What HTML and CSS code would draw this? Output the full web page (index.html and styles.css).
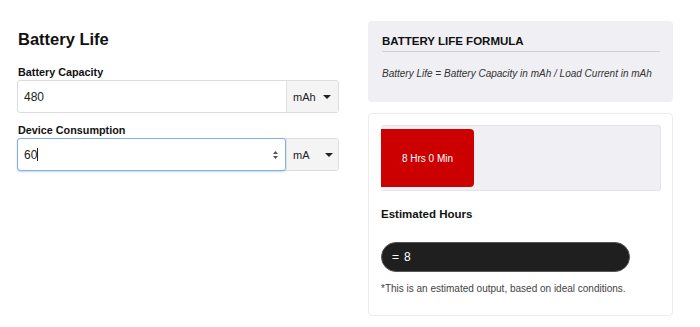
FILE: index.html
```html
<!DOCTYPE html>
<html lang="en">
<head>
  <meta charset="UTF-8" />
  <meta name="viewport" content="width=device-width, initial-scale=1" />
  <title>Battery Life Calculator</title>
  <link rel="stylesheet" href="styles.css">
</head>
<body>
  <div class="page">
    <div class="calc">
      <h1>Battery Life</h1>
      <label class="field-label" for="capacity">Battery Capacity</label>
      <div class="field">
        <input type="text" id="capacity" value="480" />
        <div class="unit">mAh <span class="caret"></span></div>
      </div>
      <label class="field-label" for="load">Device Consumption</label>
      <div class="field">
        <div class="input-wrap focused">
          <input type="text" id="load" value="60" />
          <span class="cursor"></span>
          <svg class="spin" width="7" height="10" viewBox="0 0 7 10"><path d="M3.5 1 L6 4 H1 Z M3.5 9 L6 6 H1 Z" fill="#555"/></svg>
        </div>
        <div class="unit">mA <span class="caret wide"></span></div>
      </div>
    </div>

    <div class="side">
      <div class="formula">
        <h2>BATTERY LIFE FORMULA</h2>
        <p>Battery Life = Battery Capacity in mAh / Load Current in mAh</p>
      </div>
      <div class="result">
        <div class="bar">
          <div class="bar-fill" style="width: 93px">8 Hrs 0 Min</div>
        </div>
        <h3>Estimated Hours</h3>
        <div class="pill"><span class="eq">=</span> 8</div>
        <p class="note">*This is an estimated output, based on ideal conditions.</p>
      </div>
    </div>
  </div>
</body>
</html>
```

FILE: styles.css
```css
body {
  margin: 0;
  font-family: "Liberation Sans", Arial, sans-serif;
  color: #111;
  background: #fff;
}
.page {
  display: flex;
  gap: 29px;
  padding: 21px 0 0 17px;
}
.calc {
  width: 322px;
  display: flex;
  flex-direction: column;
}
h1 {
  margin: 8px 0 16px 1px;
  font-size: 16.5px;
  line-height: 20px;
}
.field-label {
  font-size: 10.8px;
  font-weight: bold;
  line-height: 14px;
  margin: 0 0 1px 1px;
}
.field {
  display: flex;
  height: 33px;
  margin-bottom: 10px;
  border: 1px solid #dcdcdc;
  border-radius: 3px;
  box-sizing: border-box;
}
.field input {
  flex: 1;
  min-width: 0;
  border: none;
  outline: none;
  padding: 0 6px;
  font: 12px "Liberation Sans", Arial, sans-serif;
  color: #222;
  background: transparent;
}
.input-wrap {
  flex: 1;
  display: flex;
  align-items: center;
  margin: -1px 0 -1px -1px;
  border: 1px solid #86aee6;
  border-radius: 3px;
  box-shadow: 0 1px 2px rgba(90, 140, 220, 0.35);
}
.input-wrap input {
  flex: 0 0 auto;
  width: 13px;
  padding: 0 0 0 6px;
}
.cursor {
  width: 1px;
  height: 13px;
  background: #222;
}
.input-wrap .spin {
  margin-left: auto;
  margin-right: 6px;
}
.unit {
  width: 52px;
  display: flex;
  align-items: center;
  gap: 7px;
  padding-left: 6px;
  box-sizing: border-box;
  background: #f4f4f4;
  border-left: 1px solid #e2e2e2;
  font-size: 11px;
  color: #222;
}
.caret {
  width: 0;
  height: 0;
  border-left: 4px solid transparent;
  border-right: 4px solid transparent;
  border-top: 4px solid #222;
}
.caret.wide {
  margin-left: 8px;
}
.side {
  width: 305px;
  display: flex;
  flex-direction: column;
  gap: 11px;
}
.formula {
  background: #efeff4;
  border-radius: 4px;
  padding: 12px 13px 21px 14px;
}
.formula h2 {
  margin: 0;
  font-size: 11.5px;
  line-height: 16px;
  padding-bottom: 2px;
  border-bottom: 1px solid #cfcfd4;
}
.formula p {
  margin: 15px 0 0;
  font-size: 10px;
  line-height: 14px;
  font-style: italic;
  color: #333;
}
.result {
  border: 1px solid #ececec;
  border-radius: 4px;
  padding: 11px 11px 19px 12px;
}
.bar {
  height: 66px;
  box-sizing: border-box;
  padding: 3px 0;
  background: #efeff4;
  border: 1px solid #e3e3e8;
  border-left: none;
  border-radius: 3px;
}
.bar-fill {
  height: 100%;
  background: #cc0000;
  border-radius: 0 4px 4px 0;
  color: #fff;
  font-size: 10px;
  display: flex;
  align-items: center;
  justify-content: center;
}
.result h3 {
  margin: 15px 0 0;
  font-size: 11.5px;
  line-height: 16px;
}
.pill {
  margin-top: 20px;
  width: 249px;
  height: 30px;
  box-sizing: border-box;
  background: #1f1f1f;
  border: 1px solid #555;
  border-radius: 15px;
  color: #fff;
  font-size: 12px;
  display: flex;
  align-items: center;
  padding-left: 10px;
}
.pill .eq {
  margin-right: 5px;
}
.note {
  margin: 10px 0 0;
  font-size: 10px;
  line-height: 14px;
  color: #444;
}
```
